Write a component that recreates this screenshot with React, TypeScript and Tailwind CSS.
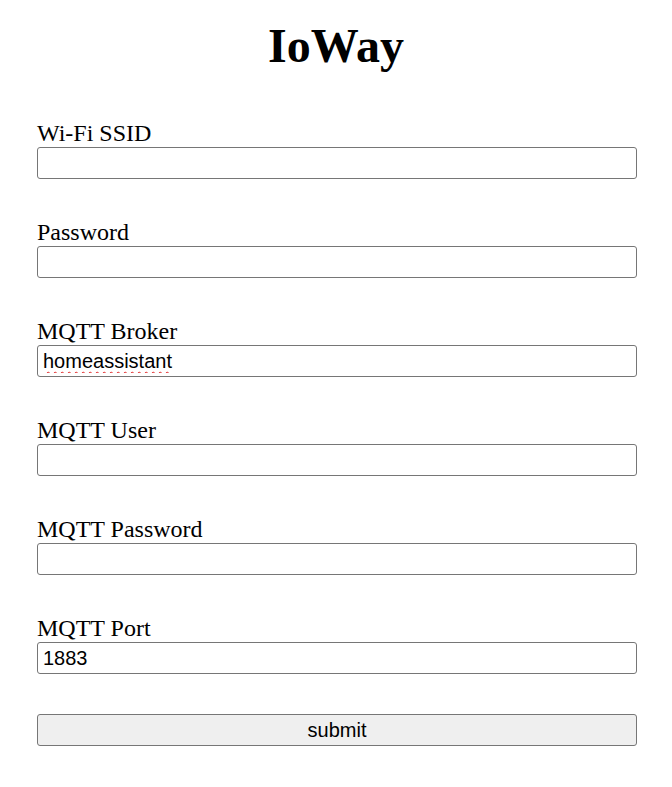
import React from "react";

const fields: { label: string; value: string; wavy?: boolean }[] = [
  { label: "Wi-Fi SSID", value: "" },
  { label: "Password", value: "" },
  { label: "MQTT Broker", value: "homeassistant", wavy: true },
  { label: "MQTT User", value: "" },
  { label: "MQTT Password", value: "" },
  { label: "MQTT Port", value: "1883" },
];

export default function App() {
  return (
    <div className="min-h-[787px] bg-white text-black" style={{ fontFamily: '"Liberation Serif", "Times New Roman", serif' }}>
      <h1 className="pt-[18px] text-center text-[48px] font-bold leading-[55px]">IoWay</h1>
      <form className="ml-[37px] mt-[46px] flex w-[600px] flex-col gap-[39px]" onSubmit={(e) => e.preventDefault()}>
        {fields.map((f) => (
          <div key={f.label} className="flex flex-col">
            <label className="text-[24px] leading-[28px]">{f.label}</label>
            <input
              type="text"
              defaultValue={f.value}
              spellCheck={false}
              className={
                f.wavy
                  ? "h-[32px] w-full rounded-[3px] border border-[#767676] px-[5px] text-[20px] underline decoration-[#e02020] decoration-wavy decoration-1 underline-offset-[3px] outline-none"
                  : "h-[32px] w-full rounded-[3px] border border-[#767676] px-[5px] text-[20px] outline-none"
              }
              style={{ fontFamily: '"Liberation Sans", Arial, sans-serif' }}
            />
          </div>
        ))}
        <button
          type="submit"
          className="-mt-[-1px] h-[32px] w-full rounded-[3px] border border-[#767676] bg-[#efefef] text-[20px]"
          style={{ fontFamily: '"Liberation Sans", Arial, sans-serif' }}
        >
          submit
        </button>
      </form>
    </div>
  );
}
